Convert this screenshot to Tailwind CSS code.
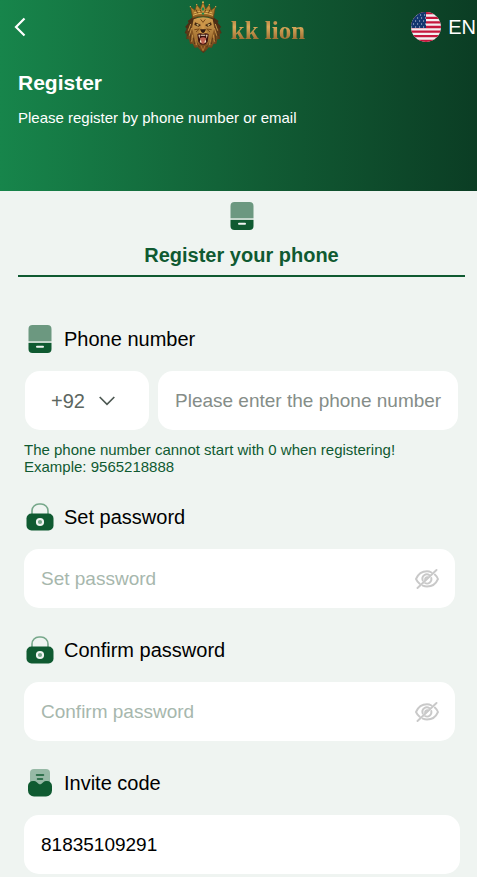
<!DOCTYPE html>
<html lang="en">
<head>
<meta charset="utf-8">
<meta name="viewport" content="width=device-width, initial-scale=1">
<title>Register</title>
<script src="https://cdn.jsdelivr.net/npm/@tailwindcss/browser@4"></script>
</head>
<body class="bg-[#eff4f1] font-['Liberation_Sans',Arial,sans-serif] text-black">
<svg class="hidden" aria-hidden="true">
  <symbol id="phone" viewBox="0 0 24 28">
    <path d="M.5 16V4a4 4 0 0 1 4-4h15a4 4 0 0 1 4 4v12z" fill="#6c9880"/>
    <path d="M.5 16h23v2H.5z" fill="#c3d5ca"/>
    <path d="M.5 18h23v6a4 4 0 0 1-4 4h-15a4 4 0 0 1-4-4z" fill="#0f5a31"/>
    <path d="M9 21.700h6" stroke="#eff4f1" stroke-width="2" stroke-linecap="round"/>
  </symbol>
  <symbol id="lock" viewBox="0 0 28 28">
    <path d="M6 12V8a7 7 0 0 1 7-7h2a7 7 0 0 1 7 7V12" fill="none" stroke="#76a78a" stroke-width="1.600"/>
    <rect x=".5" y="10.500" width="27" height="17" rx="5" fill="#0f5a31"/>
    <circle cx="14" cy="19" r="3.100" fill="#76a78a" stroke="#eff4f1" stroke-width="2"/>
  </symbol>
  <symbol id="invite" viewBox="0 0 24 28">
    <rect x="2" y="0" width="20" height="20" rx="4" fill="#97b9a6"/>
    <path d="M8.500 6h7M9.500 10h5" stroke="#0f5a31" stroke-width="1.500" stroke-linecap="round"/>
    <path d="M0 17a5 5 0 0 1 5-5h1q1.500 0 2.500 1l2 1.700q1.500 1.200 3 0l2-1.700q1-1 2.500-1h1a5 5 0 0 1 5 5v4.500a6 6 0 0 1-6 6H6a6 6 0 0 1-6-6z" fill="#0f5a31"/>
  </symbol>
  <symbol id="eye" viewBox="0 0 24 20">
    <g fill="none" stroke="#c9c9c9" stroke-width="1.900" stroke-linecap="round">
      <path d="M16.500 3.500C15.200 2.800 13.600 2.300 12 2.300 6.500 2.300 2.600 6.300 1 10c.8 1.800 2 3.400 3.700 4.800M19.800 5.500C21.300 6.800 22.300 8.300 23 10c-1.600 3.700-5.500 7.500-11 7.500-1.500 0-2.900-.3-4.200-.8"/>
      <path d="M14.500 6.200A4.500 4.500 0 0 0 7.700 11.500M16.300 9A4.500 4.500 0 0 1 10.200 14.200M12.500 8.300a2 2 0 0 0-2.400 2"/>
      <path d="M21.500 1 2.500 19"/>
    </g>
  </symbol>
</svg>

<header class="h-[191px] bg-[linear-gradient(90deg,#17854b_0%,#115c34_55%,#0b3d24_100%)] text-white">
  <div class="grid h-[54px] grid-cols-[1fr_auto_1fr] items-center">
    <button type="button" aria-label="Back" class="ml-2 flex size-6 items-center justify-center">
      <svg class="h-5 w-3" viewBox="0 0 12 20" fill="none" stroke="#fff" stroke-width="2.200"><path d="M10.500 1.500 2 10l8.500 8.500"/></svg>
    </button>
    <div class="ml-3 flex items-center gap-2">
      <svg class="h-[52px] w-[39px]" viewBox="0 0 117 156" aria-hidden="true">
        <defs>
          <linearGradient id="crown" x2="0" y2="1"><stop stop-color="#d9a743"/><stop offset="1" stop-color="#85551b"/></linearGradient>
          <radialGradient id="mane"><stop stop-color="#b3792a"/><stop offset=".65" stop-color="#855522"/><stop offset="1" stop-color="#4b2d14"/></radialGradient>
          <linearGradient id="face" x2="0" y2="1"><stop stop-color="#d3a050"/><stop offset="1" stop-color="#94622a"/></linearGradient>
        </defs>
        <path d="M24 50 11 60l3 5L3 78l5 4-6 14 6 3-1 15 8 1 3 14 8-1 6 13 9-2 9 10 8 7 8-7 8-10 9 2 6-13 8 1 3-14 8-1-1-15 6-3-6-14 5-4-11-13 3-5-14-10z" fill="url(#mane)"/>
        <path d="M24 60 10 82l9-4-9 26 10-7-1 22 9-8 4 18 7-8 6 18 6-7 6 12 6-12 6 7 6-18 7 8 4-18 9 8-1-22 10 7-9-26 9 4-14-22" fill="none" stroke="#4d2d14" stroke-width="2"/>
        <path d="m20 69-7 20m10-8-7 23m10-3-3 21m12-8 2 18m12-5 4 15M94 69l7 20m-10-8 7 23m-10-3 3 21m-12-8-2 18m-12-5-4 15" stroke="#c29148" stroke-width="3" fill="none"/>
        <path d="M29 55Q57 42 86 55l5 27-9 30-13 22H46l-14-22-8-30z" fill="url(#face)"/>
        <path d="m33 64 18 8-7 5-13-5zm48 0-18 8 7 5 13-5z" fill="#43250e"/>
        <path d="m36 68 10 4-5 2zm43 0-10 4 5 2z" fill="#fff0a0"/>
        <path d="m51 59 6 13 6-13-2 26 8 9-5 6H50l-5-6 8-9z" fill="#d0984a"/>
        <path d="M48 85h18l-4 8-5 4-5-4z" fill="#311a10"/>
        <path d="m31 86 15-2-10 9m47-7-15-2 10 9M50 55l7 9 7-9" fill="none" stroke="#7c4a19" stroke-width="3"/>
        <path d="M40 100q9-6 17-1 8-5 17 1l-3 22-7 9H50l-7-9z" fill="#3a100d"/>
        <path d="M48 112q9-6 18 0l-2 14-7 3-7-3z" fill="#c06050"/>
        <path d="m43 101 5 0-2 12zm23 0 5 0-3 12zM47 124l3-9 3 10zm14 1 3-10 3 9zM50 101h14v3H50z" fill="#f0dfc0"/>
        <path d="m44 126 7 5h12l7-5-6 18-7 8-7-8z" fill="#7d4b1d"/>
        <path d="m51 134 6 15 6-15" fill="none" stroke="#c18a3b" stroke-width="2"/>
        <path d="m20 18 13 10 5-17 11 13 8-21 8 21 11-13 5 17 13-10-6 34q-31-13-62 0z" fill="url(#crown)" stroke="#694011" stroke-width="2"/>
        <path d="M27 43q30-13 60 0M29 36q28-12 56 0" stroke="#e3b75f" stroke-width="3" fill="none"/>
        <path d="m36 26 5 11m37-11-5 11M49 26l3 8m13-8-3 8" stroke="#674012" stroke-width="3"/>
        <g fill="#dfb452"><circle cx="19" cy="17" r="2"/><circle cx="38" cy="11" r="2"/><circle cx="57" cy="4" r="3"/><circle cx="76" cy="11" r="2"/><circle cx="95" cy="17" r="2"/></g>
        <path d="m57 18 4 6-4 7-4-7zm0 16 4 4-4 4-4-4z" fill="#168a53"/>
      </svg>
      <span class="bg-linear-to-b from-[#7f4f22] via-[#d9a95a] to-[#80501f] bg-clip-text pt-2 font-['Liberation_Serif',serif] text-[25px] leading-8 font-bold text-transparent">kk lion</span>
    </div>
    <button type="button" class="flex items-center gap-[7px] justify-self-end pr-px text-[20px] leading-6">
      <svg class="size-[30px]" viewBox="0 0 30 30" aria-hidden="true">
        <clipPath id="disc"><circle cx="15" cy="15" r="15"/></clipPath>
        <g clip-path="url(#disc)">
          <path d="M0 0h30v30H0z" fill="#f3eef0"/>
          <path d="M0 1.200h30M0 5.800h30M0 10.400h30M0 15h30M0 19.600h30M0 24.200h30M0 28.800h30" stroke="#c5163c" stroke-width="2.300"/>
          <path d="M0 0h15v16H0z" fill="#12366f"/>
          <path d="M5 3h10M2 6h13M0 9h15M2 12h13M0 15h15" stroke="#cbd5e8" stroke-width="1.100" stroke-dasharray="1.100 2.900"/>
        </g>
      </svg>
      EN
    </button>
  </div>
  <div class="px-[18px] pt-4">
    <h1 class="text-[21px] leading-[26px] font-bold">Register</h1>
    <p class="mt-3 text-[15px] leading-5">Please register by phone number or email</p>
  </div>
</header>

<main>
  <div class="mr-3 ml-[18px] flex flex-col items-center border-b-2 border-[#0f5a31] pt-[11px]">
    <svg class="h-7 w-6" aria-hidden="true"><use href="#phone"/></svg>
    <h2 class="mt-3 pb-[7px] text-[20px] leading-[26px] font-bold text-[#0f5a31]">Register your phone</h2>
  </div>

  <form class="pt-12 pr-[17px] pl-6 text-[20px] leading-7">
    <div class="flex items-center gap-[10px] pl-[2px]">
      <span class="flex w-7 justify-center"><svg class="h-7 w-6" aria-hidden="true"><use href="#phone"/></svg></span>
      <label for="tel">Phone number</label>
    </div>
    <div class="mt-[18px] mr-[2px] ml-px flex gap-[9px]">
      <div class="relative w-[124px] shrink-0">
        <select aria-label="Country code" class="h-[59px] w-full appearance-none rounded-[15px] bg-white pl-[26px] text-[20px] text-[#5c6660]"><option>+92</option></select>
        <svg class="pointer-events-none absolute top-[25px] right-[34px] h-[10px] w-4" viewBox="0 0 16 10" fill="none" stroke="#4d5852" stroke-width="1.700" aria-hidden="true"><path d="m.7 1 7.300 7.300L15.300 1"/></svg>
      </div>
      <input id="tel" type="tel" placeholder="Please enter the phone number" class="h-[59px] min-w-0 flex-1 rounded-[15px] bg-white pr-2 pl-[17px] text-[19px] placeholder:text-[#858d88]">
    </div>
    <p class="mt-[11px] text-[15px] leading-[17px] text-[#0f5a31]">The phone number cannot start with 0 when registering!<br>Example: 9565218888</p>

    <div class="mt-7 flex items-center gap-[10px] pl-[2px]">
      <svg class="size-7" aria-hidden="true"><use href="#lock"/></svg>
      <label for="pw">Set password</label>
    </div>
    <div class="relative mt-[18px] mr-[5px]">
      <input id="pw" type="password" placeholder="Set password" class="block h-[59px] w-full rounded-[15px] bg-white pr-14 pl-[17px] text-[19px] placeholder:text-[#a7b7ad]">
      <button type="button" aria-label="Show password" class="absolute inset-y-0 right-4"><svg class="h-5 w-6" aria-hidden="true"><use href="#eye"/></svg></button>
    </div>

    <div class="mt-7 flex items-center gap-[10px] pl-[2px]">
      <svg class="size-7" aria-hidden="true"><use href="#lock"/></svg>
      <label for="pw2">Confirm password</label>
    </div>
    <div class="relative mt-[18px] mr-[5px]">
      <input id="pw2" type="password" placeholder="Confirm password" class="block h-[59px] w-full rounded-[15px] bg-white pr-14 pl-[17px] text-[19px] placeholder:text-[#a7b7ad]">
      <button type="button" aria-label="Show password" class="absolute inset-y-0 right-4"><svg class="h-5 w-6" aria-hidden="true"><use href="#eye"/></svg></button>
    </div>

    <div class="mt-7 flex items-center gap-[10px] pl-[2px]">
      <span class="flex w-7 justify-center"><svg class="h-7 w-6" aria-hidden="true"><use href="#invite"/></svg></span>
      <label for="code">Invite code</label>
    </div>
    <input id="code" type="text" value="81835109291" class="mt-[18px] block h-[59px] w-full rounded-[15px] bg-white px-[17px] text-[19px]">
  </form>
</main>
</body>
</html>
